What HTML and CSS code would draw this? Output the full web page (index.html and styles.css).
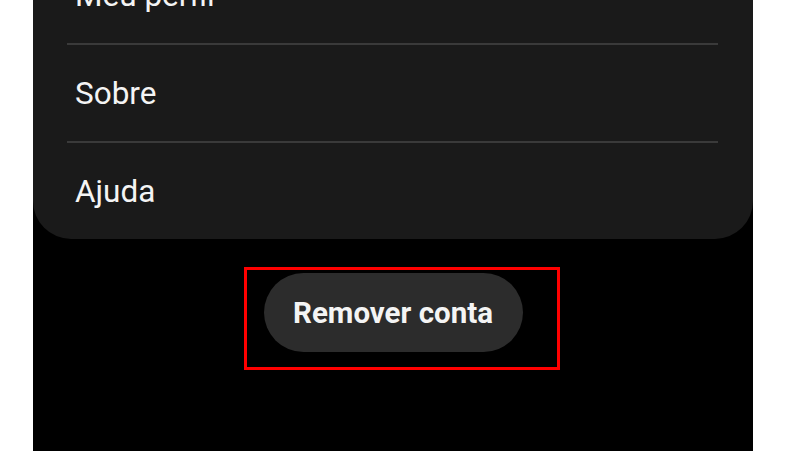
FILE: index.html
```html
<!DOCTYPE html>
<html lang="pt">
<head>
<meta charset="utf-8">
<link rel="stylesheet" href="styles.css">
</head>
<body>
<div class="screen">
  <div class="card">
    <div class="row">Meu perfil</div>
    <div class="sep"></div>
    <div class="row">Sobre</div>
    <div class="sep"></div>
    <div class="row">Ajuda</div>
  </div>
  <div class="actions">
    <button class="remove">Remover conta</button>
  </div>
  <div class="highlight"></div>
</div>
</body>
</html>
```

FILE: styles.css
```css
html, body {
  margin: 0;
  padding: 0;
  background: #ffffff;
}
body {
  font-family: Roboto, "Liberation Sans", sans-serif;
}
.screen {
  position: relative;
  margin-left: 33px;
  width: 720px;
  height: 451px;
  background: #000000;
  overflow: hidden;
}
.card {
  margin-top: -53px;
  background: #1a1a1a;
  border-radius: 0 0 38px 38px;
  display: flex;
  flex-direction: column;
}
.row {
  height: 96px;
  display: flex;
  align-items: center;
  padding-left: 42px;
  font-size: 31.5px;
  color: #f4f4f4;
}
.sep {
  height: 2px;
  margin: 0 35px 0 34px;
  background: #3a3a3a;
}
.actions {
  display: flex;
  justify-content: center;
  margin-top: 34px;
}
.remove {
  width: 259px;
  height: 79px;
  border: none;
  border-radius: 40px;
  background: #2c2c2c;
  color: #f4f4f4;
  font-family: Roboto, "Liberation Sans", sans-serif;
  font-weight: 700;
  font-size: 29.5px;
  padding: 0;
}
.highlight {
  position: absolute;
  left: 211px;
  top: 267px;
  width: 310px;
  height: 97px;
  border: 3px solid #ff0000;
}
```
